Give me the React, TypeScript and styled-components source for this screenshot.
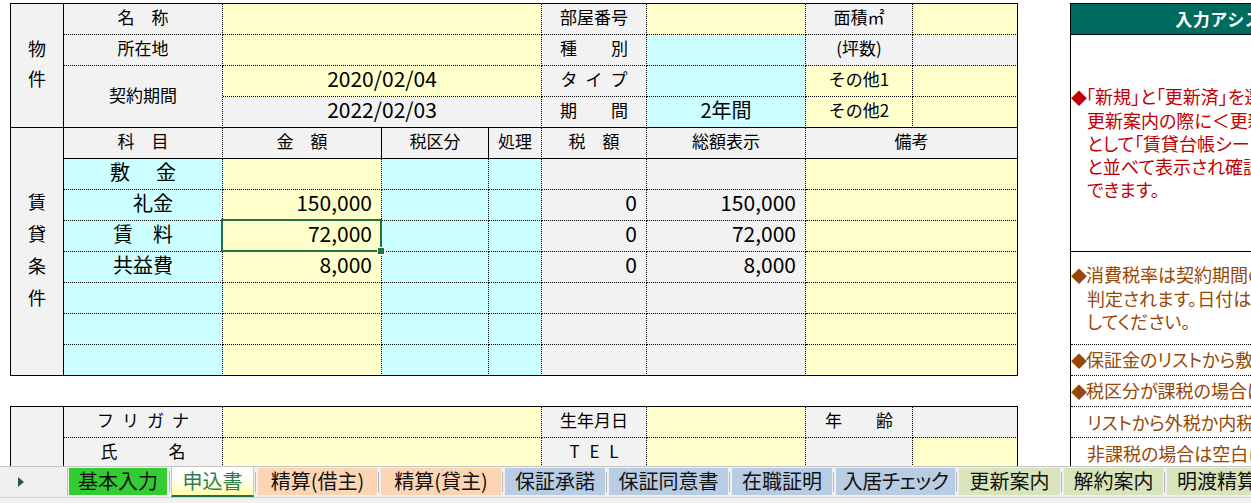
import React from 'react';
import styled, { createGlobalStyle, css } from 'styled-components';

const GlobalStyle = createGlobalStyle`
  html, body { margin: 0; padding: 0; background: #ffffff; }
  body {
    font-family: "Noto Sans CJK JP", "Noto Sans", "Liberation Sans", sans-serif;
    color: #000;
  }
  * { box-sizing: border-box; }
`;

const BG = { y: '#FFFFCC', c: '#CCFFFF', g: '#F2F2F2', w: '#FFFFFF' } as const;
type Bg = keyof typeof BG;

const Page = styled.div`
  width: 1251px;
  height: 503px;
  overflow: hidden;
  display: flex;
  flex-direction: column;
  background: #fff;
`;

const Workspace = styled.div`
  flex: 1;
  min-height: 0;
  overflow: hidden;
  display: flex;
  align-items: flex-start;
  padding: 3px 0 0 10px;
`;

const SheetColumn = styled.div`
  flex: none;
  display: flex;
  flex-direction: column;
  gap: 30px;
`;

const Grid = styled.div`
  display: grid;
  grid-template-columns: 53px 159px 159px 107px 53px 105px 159px 107px 105px;
  grid-auto-rows: 31px;
  border-top: 1px solid #000;
  border-left: 1px solid #000;
`;

type CellProps = {
  $bg: Bg;
  $span?: number;
  $rows?: number;
  $align?: 'l' | 'c' | 'r';
  $r?: boolean;
  $b?: boolean;
  $fs?: number;
  $ls?: number;
  $sel?: boolean;
};

const Cell = styled.div<CellProps>`
  grid-column: span ${(p) => p.$span ?? 1};
  grid-row: span ${(p) => p.$rows ?? 1};
  background: ${(p) => BG[p.$bg]};
  border-right: 1px ${(p) => (p.$r ? 'solid' : 'dotted')} #000;
  border-bottom: 1px ${(p) => (p.$b ? 'solid' : 'dotted')} #000;
  display: flex;
  align-items: center;
  justify-content: ${(p) =>
    p.$align === 'r' ? 'flex-end' : p.$align === 'l' ? 'flex-start' : 'center'};
  padding-right: ${(p) => (p.$align === 'r' ? 9 : 0)}px;
  padding-left: ${(p) => p.$ls ?? 0}px;
  padding-bottom: 5px;
  font-size: ${(p) => p.$fs ?? 17}px;
  letter-spacing: ${(p) => p.$ls ?? 0}px;
  line-height: 1;
  white-space: nowrap;
  position: relative;
  min-width: 0;
  ${(p) =>
    p.$sel &&
    css`
      z-index: 2;
      &::before {
        content: '';
        position: absolute;
        top: -2px;
        left: -2px;
        right: -1px;
        bottom: -1px;
        border: 2px solid #217346;
        pointer-events: none;
      }
      &::after {
        content: '';
        position: absolute;
        right: -4px;
        bottom: -4px;
        width: 6px;
        height: 6px;
        background: #217346;
        border: 1px solid #fff;
      }
    `}
`;

const VStack = styled.div<{ $step: number }>`
  display: flex;
  flex-direction: column;
  align-items: center;
  font-size: 18px;
  line-height: ${(p) => p.$step}px;
`;

type CellDef = {
  t?: string;
  bg: Bg;
  span?: number;
  rows?: number;
  al?: 'l' | 'c' | 'r';
  r?: boolean;
  b?: boolean;
  fs?: number;
  ls?: number;
  v?: number;
  sel?: boolean;
};

const D = 20;
const N = 21;

const upperCells: CellDef[] = [
  // 物件 row 1
  { t: '物件', bg: 'g', rows: 4, r: true, b: true, v: 30 },
  { t: '名　称', bg: 'g' },
  { bg: 'y', span: 3 },
  { t: '部屋番号', bg: 'g' },
  { bg: 'y' },
  { t: '面積㎡', bg: 'g' },
  { bg: 'y', r: true },
  // row 2
  { t: '所在地', bg: 'g' },
  { bg: 'y', span: 3 },
  { t: '種　　別', bg: 'g' },
  { bg: 'c' },
  { t: '(坪数)', bg: 'g' },
  { bg: 'g', r: true },
  // row 3
  { t: '契約期間', bg: 'g', rows: 2, b: true },
  { t: '2020/02/04', bg: 'y', span: 3, fs: N },
  { t: 'タイプ', bg: 'g', ls: 8 },
  { bg: 'c' },
  { t: 'その他1', bg: 'y' },
  { bg: 'y', r: true },
  // row 4
  { t: '2022/02/03', bg: 'g', span: 3, fs: N, b: true },
  { t: '期　　間', bg: 'g', b: true },
  { t: '2年間', bg: 'c', fs: D, b: true },
  { t: 'その他2', bg: 'y', b: true },
  { bg: 'y', r: true, b: true },
  // header
  { t: '賃貸条件', bg: 'g', rows: 8, r: true, b: true, v: 32 },
  { t: '科　目', bg: 'g', b: true },
  { t: '金　額', bg: 'g', b: true, r: true },
  { t: '税区分', bg: 'g', b: true, r: true },
  { t: '処理', bg: 'g', b: true },
  { t: '税　額', bg: 'g', b: true },
  { t: '総額表示', bg: 'g', b: true },
  { t: '備考', bg: 'g', b: true, span: 2, r: true },
];

const rentRows: { item: string; amount?: string; tax?: string; total?: string; sel?: boolean }[] = [
  { item: '敷　金' },
  { item: '　礼金', amount: '150,000', tax: '0', total: '150,000' },
  { item: '賃　料', amount: '72,000', tax: '0', total: '72,000', sel: true },
  { item: '共益費', amount: '8,000', tax: '0', total: '8,000' },
  { item: '' },
  { item: '' },
  { item: '' },
];

rentRows.forEach((row, i) => {
  const last = i === rentRows.length - 1;
  upperCells.push(
    { t: row.item, bg: 'c', fs: D, b: last, ls: row.item === '敷　金' ? 3 : 0 },
    { t: row.amount, bg: 'y', al: 'r', fs: N, b: last, sel: row.sel },
    { bg: 'c', b: last },
    { bg: 'c', b: last },
    { t: row.tax, bg: 'g', al: 'r', fs: N, b: last },
    { t: row.total, bg: 'g', al: 'r', fs: N, b: last },
    { bg: 'y', span: 2, r: true, b: last },
  );
});

const applicantCells: CellDef[] = [
  { bg: 'g', rows: 3, r: true, b: true },
  { t: 'フリガナ', bg: 'g', ls: 8 },
  { bg: 'y', span: 3 },
  { t: '生年月日', bg: 'g' },
  { bg: 'y' },
  { t: '年　　齢', bg: 'g' },
  { bg: 'g', r: true },
  { t: '氏　　　名', bg: 'g' },
  { bg: 'y', span: 3 },
  { t: 'T E L', bg: 'g', ls: 3 },
  { bg: 'y' },
  { bg: 'g' },
  { bg: 'y', r: true },
  { t: '現 住 所', bg: 'g', b: true },
  { bg: 'y', span: 7, r: true, b: true },
];

const renderCells = (cells: CellDef[]) =>
  cells.map((c, i) => (
    <Cell
      key={i}
      $bg={c.bg}
      $span={c.span}
      $rows={c.rows}
      $align={c.al}
      $r={c.r}
      $b={c.b}
      $fs={c.fs}
      $ls={c.ls}
      $sel={c.sel}
    >
      {c.v ? (
        <VStack $step={c.v}>
          {Array.from(c.t ?? '').map((ch, j) => (
            <span key={j}>{ch}</span>
          ))}
        </VStack>
      ) : (
        c.t
      )}
    </Cell>
  ));

/* ---------- assistant panel ---------- */

const Assistant = styled.aside`
  flex: none;
  width: 350px;
  margin-left: 52px;
  border-top: 1px solid #000;
  border-left: 1px solid #000;
  border-right: 1px solid #000;
  background: #fff;
`;

const AssistHeader = styled.div`
  height: 31px;
  background: #006b5f;
  color: #fff;
  font-weight: bold;
  font-size: 17px;
  display: flex;
  align-items: center;
  justify-content: center;
  border-bottom: 1px solid #000;
  letter-spacing: 0.5px;
  padding-bottom: 2px;
`;

const NoteBox = styled.div<{ $h: number; $color: string; $lh: number; $solid?: boolean }>`
  height: ${(p) => p.$h}px;
  border-bottom: 1px ${(p) => (p.$solid ? 'solid' : 'dotted')} #000;
  display: flex;
  flex-direction: column;
  justify-content: center;
  padding-left: 1px;
  color: ${(p) => p.$color};
  font-size: 18px;
  line-height: ${(p) => p.$lh}px;
  white-space: nowrap;
  overflow: hidden;
  font-feature-settings: "palt";
`;

const NoteLine = styled.div<{ $indent?: boolean }>`
  padding-left: ${(p) => (p.$indent ? 15 : 0)}px;
`;

const Diamond = styled.span`
  display: inline-block;
  width: 15px;
  font-size: 16px;
  margin-left: -1px;
`;

const RED = '#C00000';
const BROWN = '#974706';

/* ---------- tab bar ---------- */

const TabBar = styled.div`
  flex: none;
  height: 37px;
  background: #f0f0f0;
  border-top: 1px solid #c4c4c4;
`;

const TabRow = styled.div`
  height: 31px;
  display: flex;
  align-items: flex-start;
  border-bottom: 1px solid #d2d2d2;
`;

const Nav = styled.div`
  flex: none;
  width: 68px;
  height: 28px;
  display: flex;
  align-items: center;
  padding-left: 18px;
  border-right: 1px solid #c0c0c0;
  margin-top: 1px;
`;

const Tabs = styled.div`
  display: flex;
  gap: 4px;
  padding-left: 1px;
`;

const Tab = styled.div<{ $bg: string; $w: number; $active?: boolean; $tight?: boolean }>`
  flex: none;
  position: relative;
  width: ${(p) => p.$w}px;
  height: 27px;
  margin-top: 1px;
  padding-bottom: 2px;
  background: ${(p) => p.$bg};
  font-size: 20px;
  line-height: 1;
  display: flex;
  align-items: center;
  justify-content: center;
  white-space: nowrap;
  color: #111;
  font-feature-settings: ${(p) => (p.$tight ? '"palt"' : 'normal')};
  letter-spacing: ${(p) => (p.$tight ? '-0.5px' : '0')};
  &:not(:first-child)::before {
    content: '';
    position: absolute;
    left: -3px;
    top: 4px;
    bottom: 3px;
    width: 1px;
    background: #b8b8b8;
  }
  ${(p) =>
    p.$active &&
    css`
      height: 30px;
      margin-top: 0;
      background: linear-gradient(#ffffff 35%, #ffffa8);
      color: #2e7d4f;
      border-bottom: 2px solid #217346;
      border-left: 1px solid #c8c8c8;
      border-right: 1px solid #c8c8c8;
      padding-top: 1px;
    `}
`;

const tabs: { name: string; bg: string; w: number; active?: boolean; tight?: boolean }[] = [
  { name: '基本入力', bg: '#33cc33', w: 98 },
  { name: '申込書', bg: '#ffffff', w: 83, active: true },
  { name: '精算(借主)', bg: '#fcd5b4', w: 119 },
  { name: '精算(貸主)', bg: '#fcd5b4', w: 120 },
  { name: '保証承諾', bg: '#b8cce4', w: 100 },
  { name: '保証同意書', bg: '#b8cce4', w: 119 },
  { name: '在職証明', bg: '#b8cce4', w: 100 },
  { name: '入居チェック', bg: '#b8cce4', w: 119, tight: true },
  { name: '更新案内', bg: '#d8e4bc', w: 101 },
  { name: '解約案内', bg: '#d8e4bc', w: 99 },
  { name: '明渡精算', bg: '#d8e4bc', w: 100 },
];

export default function App() {
  return (
    <Page>
      <GlobalStyle />
      <Workspace>
        <SheetColumn>
          <Grid>{renderCells(upperCells)}</Grid>
          <Grid>{renderCells(applicantCells)}</Grid>
        </SheetColumn>
        <Assistant>
          <AssistHeader>入力アシスタント</AssistHeader>
          <NoteBox $h={217} $color={RED} $lh={23} $solid>
            <NoteLine>
              <Diamond>◆</Diamond>「新規」と「更新済」を選択すると、
            </NoteLine>
            <NoteLine $indent>更新案内の際に＜更新前＞の内容</NoteLine>
            <NoteLine $indent>として「賃貸台帳シート」の内容</NoteLine>
            <NoteLine $indent>と並べて表示され確認することが</NoteLine>
            <NoteLine $indent>できます。</NoteLine>
          </NoteBox>
          <NoteBox $h={93} $color={BROWN} $lh={23}>
            <NoteLine>
              <Diamond>◆</Diamond>消費税率は契約期間の開始日で
            </NoteLine>
            <NoteLine $indent>判定されます。日付は正しく入力</NoteLine>
            <NoteLine $indent>してください。</NoteLine>
          </NoteBox>
          <NoteBox $h={31} $color={BROWN} $lh={23}>
            <NoteLine>
              <Diamond>◆</Diamond>保証金のリストから敷金を選択
            </NoteLine>
          </NoteBox>
          <NoteBox $h={31} $color={BROWN} $lh={23}>
            <NoteLine>
              <Diamond>◆</Diamond>税区分が課税の場合は、
            </NoteLine>
          </NoteBox>
          <NoteBox $h={31} $color={BROWN} $lh={23}>
            <NoteLine $indent>リストから外税か内税を選択</NoteLine>
          </NoteBox>
          <NoteBox $h={31} $color={BROWN} $lh={23}>
            <NoteLine $indent>非課税の場合は空白にしてください。</NoteLine>
          </NoteBox>
        </Assistant>
      </Workspace>
      <TabBar>
        <TabRow>
          <Nav>
            <svg width="6" height="10" viewBox="0 0 6 10">
              <polygon points="0,0 6,5 0,10" fill="#1f5f3a" />
            </svg>
          </Nav>
          <Tabs>
            {tabs.map((t) => (
              <Tab key={t.name} $bg={t.bg} $w={t.w} $active={t.active} $tight={t.tight}>
                {t.name}
              </Tab>
            ))}
          </Tabs>
        </TabRow>
      </TabBar>
    </Page>
  );
}
